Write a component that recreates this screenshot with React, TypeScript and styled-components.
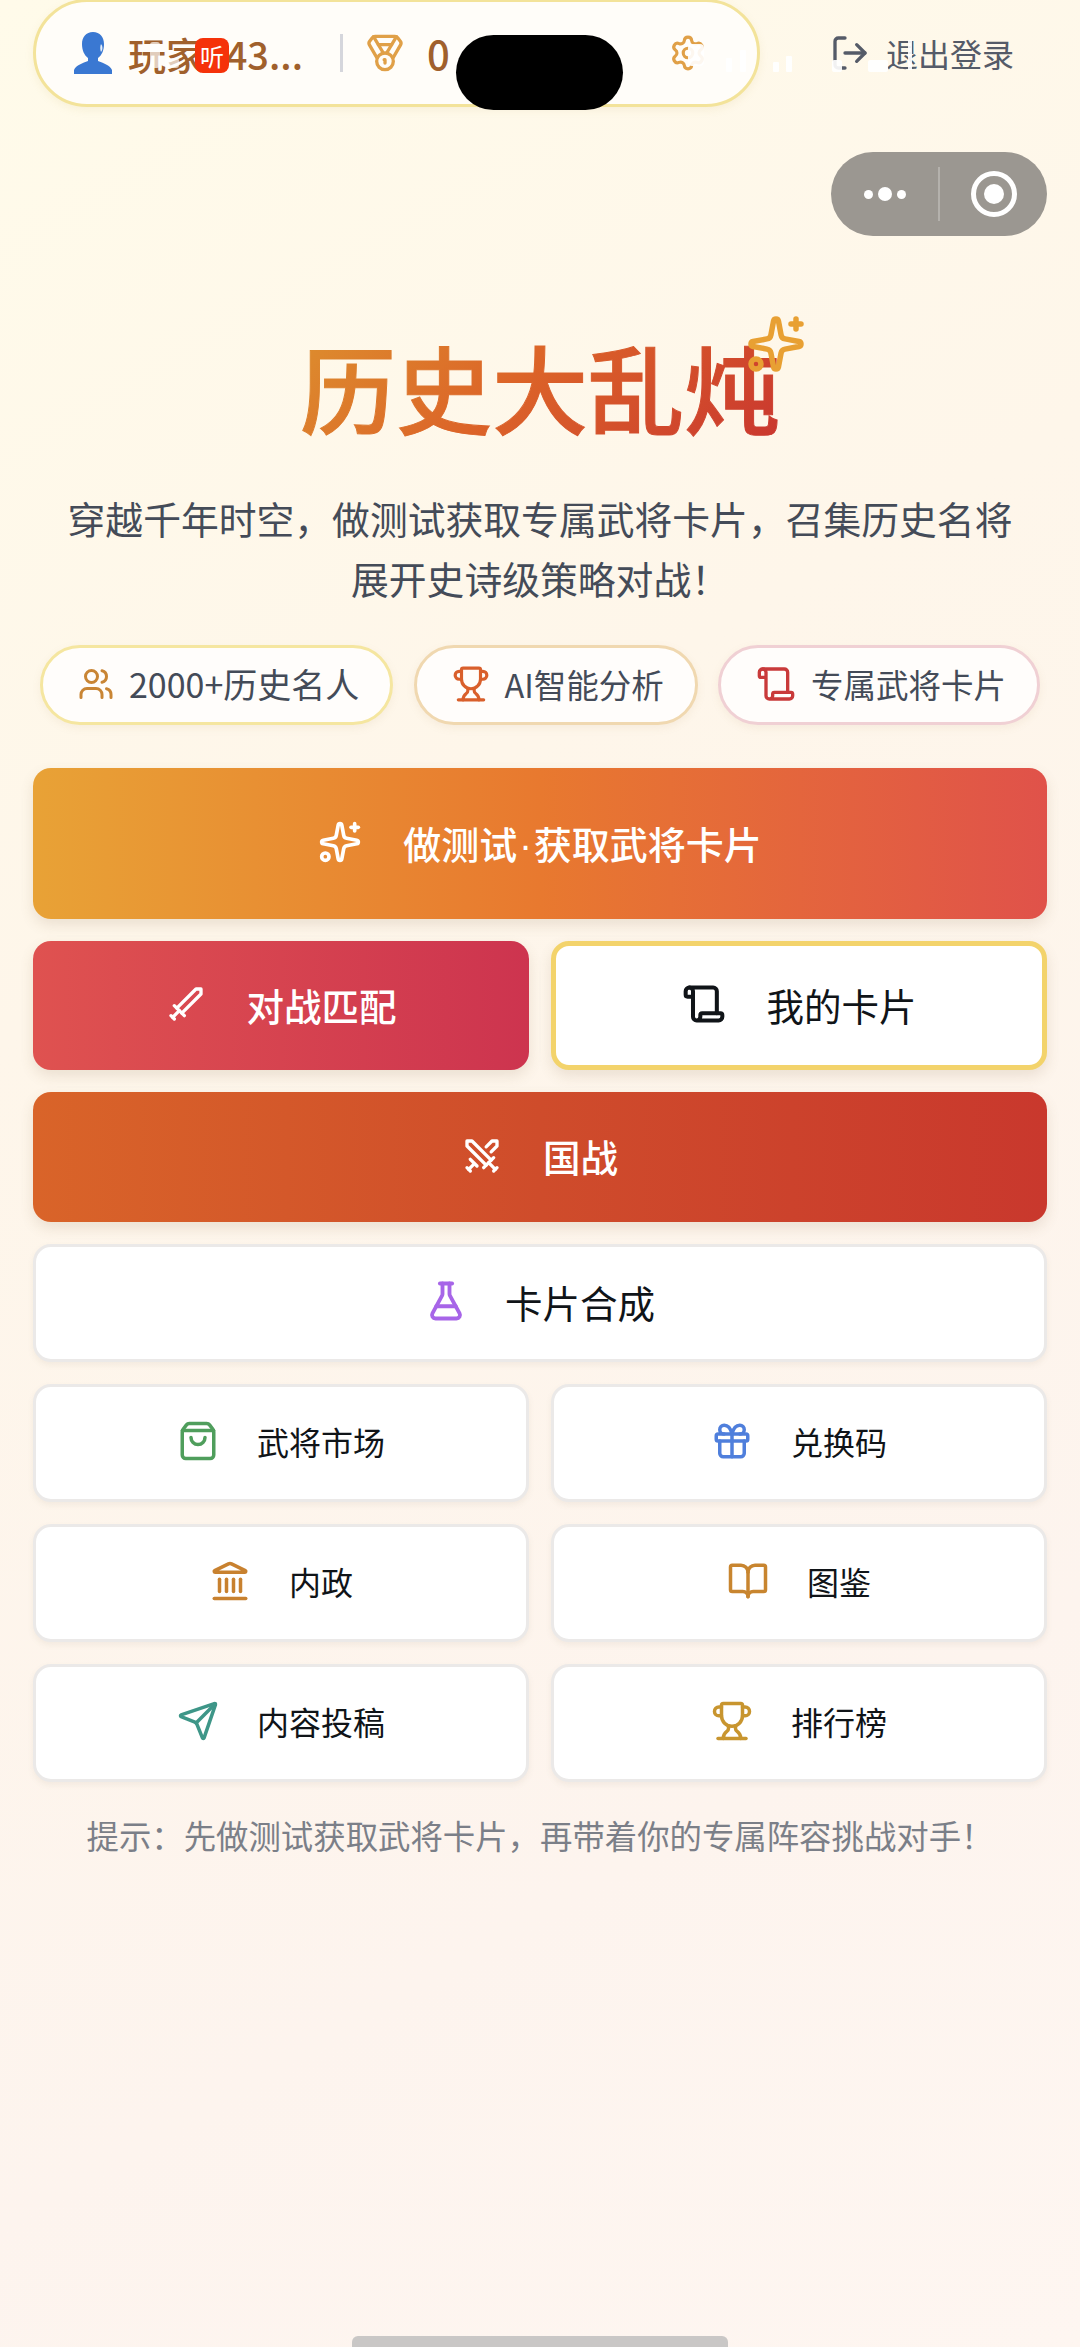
import React from "react";
import styled, { createGlobalStyle } from "styled-components";
import {
    BookOpen,
    FlaskConical,
    Gift,
    Landmark,
    LogOut,
    Medal,
    Scroll,
    Send,
    Settings,
    ShoppingBag,
    Sparkles,
    Sword,
    Swords,
    Trophy,
    Users,
    LucideIcon,
} from "lucide-react";

const GlobalStyle = createGlobalStyle`
    html, body {
        margin: 0;
        padding: 0;
    }
    body {
        font-family: "Noto Sans CJK SC", "Liberation Sans", sans-serif;
    }
    * {
        box-sizing: border-box;
    }
`;

const Page = styled.div`
    position: relative;
    width: 1080px;
    height: 2347px;
    overflow: hidden;
    padding: 0 33px;
    background: linear-gradient(150deg, #fffbea 0%, #fef6ea 35%, #fdf4ee 75%, #fef6f1 100%);
`;

const Header = styled.div`
    display: flex;
    align-items: center;
    height: 108px;
    margin-top: -1px;
`;

const UserPill = styled.div`
    display: flex;
    align-items: center;
    width: 727px;
    height: 100%;
    padding: 0 50px 0 38px;
    background: #fffdf9;
    border: 3px solid #f3e39a;
    border-radius: 54px;
    box-shadow: 0 3px 8px rgba(200, 170, 90, 0.12);
`;

const PlayerName = styled.span`
    margin-left: 16px;
    width: 180px;
    font-size: 38px;
    font-weight: 500;
    color: #a0602c;
    white-space: nowrap;
`;

const Divider = styled.span`
    width: 3px;
    height: 38px;
    margin: 0 22px 0 32px;
    background: #d5d6dc;
`;

const Score = styled.span`
    margin-left: 22px;
    flex: 1;
    font-size: 40px;
    font-weight: 500;
    color: #a0602c;
`;

const LogoutButton = styled.div`
    display: flex;
    align-items: center;
    gap: 16px;
    margin-left: 70px;
    font-size: 32px;
    color: #555b68;
`;

const Hero = styled.div`
    display: flex;
    flex-direction: column;
    align-items: center;
    margin-top: 219px;
`;

const TitleWrap = styled.div`
    position: relative;
`;

const Title = styled.h1`
    margin: 0;
    font-size: 96px;
    line-height: 120px;
    font-weight: 500;
    letter-spacing: 0;
    background: linear-gradient(135deg, #dd8f2e 0%, #dc6428 45%, #c9362f 100%);
    -webkit-background-clip: text;
    background-clip: text;
    color: transparent;
    -webkit-text-stroke: 1px transparent;
`;

const TitleSparkle = styled(Sparkles)`
    position: absolute;
    top: -12px;
    right: -26px;
    color: #e8a033;
`;

const Subtitle = styled.p`
    margin: 42px 0 0;
    font-size: 37.8px;
    line-height: 60px;
    text-align: center;
    color: #444b58;
`;

const Chips = styled.div`
    display: flex;
    justify-content: space-between;
    margin: 37px -7px 0;
    padding: 0 14px;
`;

const Chip = styled.div<{ $border: string; $size: number }>`
    display: flex;
    align-items: center;
    gap: 15px;
    height: 80px;
    padding: 0 31px 3px 35px;
    background: #fffdfb;
    border: 3px solid ${(props) => props.$border};
    border-radius: 40px;
    font-size: ${(props) => props.$size}px;
    color: #444b58;
    box-shadow: 0 3px 8px rgba(180, 150, 100, 0.1);
    white-space: nowrap;
`;

const Actions = styled.div`
    display: flex;
    flex-direction: column;
    gap: 22px;
    margin-top: 43px;
`;

const Row = styled.div`
    display: grid;
    grid-template-columns: 1fr 1fr;
    gap: 22px;
`;

const ActionButton = styled.div<{
    $bg: string;
    $color: string;
    $height: number;
    $size: number;
    $border?: string;
    $weight?: number;
}>`
    display: flex;
    align-items: center;
    justify-content: center;
    gap: 41px;
    height: ${(props) => props.$height}px;
    padding-bottom: 3px;
    background: ${(props) => props.$bg};
    color: ${(props) => props.$color};
    font-size: ${(props) => props.$size}px;
    font-weight: ${(props) => props.$weight || 500};
    border: ${(props) => props.$border || "none"};
    border-radius: 18px;
    box-shadow: 0 6px 14px rgba(120, 90, 60, 0.14);
`;

const NarrowDot = styled.span`
    font-family: "Liberation Sans", sans-serif;
    margin: 0 2px;
`;

const LightButton = styled.div<{ $height: number; $size: number }>`
    display: flex;
    align-items: center;
    justify-content: center;
    gap: 38px;
    height: ${(props) => props.$height}px;
    padding-bottom: 4px;
    background: #ffffff;
    color: #101418;
    font-size: ${(props) => props.$size}px;
    border: 3px solid #ebe9e8;
    border-radius: 18px;
    box-shadow: 0 3px 6px rgba(120, 100, 80, 0.08);
`;

const Hint = styled.p`
    margin: 30px 0 0;
    font-size: 32.4px;
    line-height: 46px;
    text-align: center;
    color: #7b7f88;
`;

// the phone chrome that the screenshot has on top of the page
const Notch = styled.div`
    position: absolute;
    left: 456px;
    top: 35px;
    width: 167px;
    height: 75px;
    background: #000;
    border-radius: 38px;
`;

const ListenBadge = styled.div`
    position: absolute;
    left: 195px;
    top: 38px;
    width: 34px;
    height: 35px;
    display: flex;
    align-items: center;
    justify-content: center;
    background: #f5320a;
    border-radius: 8px;
    color: #fff;
    font-size: 24px;
`;

const StatusIcons = styled.svg`
    position: absolute;
    left: 0;
    top: 0;
`;

const Capsule = styled.div`
    position: absolute;
    left: 831px;
    top: 152px;
    width: 216px;
    height: 84px;
    display: flex;
    align-items: center;
    background: #9b9791;
    border-radius: 42px;
`;

const CapsuleSide = styled.div`
    flex: 1;
    display: flex;
    align-items: center;
    justify-content: center;
    gap: 5px;
`;

const CapsuleLine = styled.span`
    width: 2px;
    height: 54px;
    background: rgba(255, 255, 255, 0.25);
`;

const Dot = styled.span<{ $size: number }>`
    width: ${(props) => props.$size}px;
    height: ${(props) => props.$size}px;
    border-radius: 50%;
    background: #fff;
`;

const Ring = styled.span`
    display: flex;
    align-items: center;
    justify-content: center;
    width: 46px;
    height: 46px;
    border: 5px solid #fff;
    border-radius: 50%;
`;

const HomeBar = styled.div`
    position: absolute;
    left: 352px;
    bottom: 0;
    width: 376px;
    height: 11px;
    background: #c9c7c6;
    border-radius: 6px 6px 0 0;
`;

const chips: { icon: LucideIcon; color: string; border: string; text: string; iconSize: number; fontSize: number }[] = [
    { icon: Users, color: "#c98534", border: "#f5e6a0", text: "2000+历史名人", iconSize: 36, fontSize: 34 },
    { icon: Trophy, color: "#d95f2b", border: "#f0d8b0", text: "AI智能分析", iconSize: 38, fontSize: 32.5 },
    { icon: Scroll, color: "#c93a3a", border: "#f0d0d4", text: "专属武将卡片", iconSize: 40, fontSize: 32.5 },
];

const gridRows: { icon: LucideIcon; color: string; text: string }[][] = [
    [
        { icon: ShoppingBag, color: "#4f9e5c", text: "武将市场" },
        { icon: Gift, color: "#4f7fdc", text: "兑换码" },
    ],
    [
        { icon: Landmark, color: "#c8812f", text: "内政" },
        { icon: BookOpen, color: "#c8852f", text: "图鉴" },
    ],
    [
        { icon: Send, color: "#3e9688", text: "内容投稿" },
        { icon: Trophy, color: "#c8952f", text: "排行榜" },
    ],
];

const UserGlyph = () => (
    <svg width="38" height="42" viewBox="0 0 38 42">
        <path d="M19 0c7 0 11 5 11 12 0 6-2 11-6 14v3c5 2 12 4 14 9l0 4H0v-4c2-5 9-7 14-9v-3c-4-3-6-8-6-14C8 5 12 0 19 0z" fill="#3a78d2" />
        <path d="M27 12c2 2 2 6 0 8-1-2-1-6 0-8z" fill="#e6eef8" />
    </svg>
);

export default function App() {
    return (
        <Page>
            <GlobalStyle />
            <Header>
                <UserPill>
                    <UserGlyph />
                    <PlayerName>玩家943...</PlayerName>
                    <Divider />
                    <Medal size={40} color="#e0a048" strokeWidth={2} />
                    <Score>0</Score>
                    <Settings size={38} color="#e0a048" strokeWidth={2} />
                </UserPill>
                <LogoutButton>
                    <LogOut size={40} color="#555b68" strokeWidth={2} style={{ display: "block" }} />
                    退出登录
                </LogoutButton>
            </Header>
            <Hero>
                <TitleWrap>
                    <Title>历史大乱炖</Title>
                    <TitleSparkle size={60} strokeWidth={2.2} />
                </TitleWrap>
                <Subtitle>
                    穿越千年时空，做测试获取专属武将卡片，召集历史名将
                    <br />
                    展开史诗级策略对战！
                </Subtitle>
            </Hero>
            <Chips>
                {chips.map((chip) => (
                    <Chip key={chip.text} $border={chip.border} $size={chip.fontSize}>
                        <chip.icon size={chip.iconSize} color={chip.color} strokeWidth={2} />
                        {chip.text}
                    </Chip>
                ))}
            </Chips>
            <Actions>
                <ActionButton $bg="linear-gradient(90deg, #e8a236 0%, #e8792f 50%, #e0524a 100%)" $color="#fff" $height={151} $size={38}>
                    <Sparkles size={44} strokeWidth={2} />
                    <span>
                        做测试<NarrowDot>·</NarrowDot>获取武将卡片
                    </span>
                </ActionButton>
                <Row>
                    <ActionButton $bg="linear-gradient(90deg, #df5250 0%, #cd344f 100%)" $color="#fff" $height={129} $size={37.5}>
                        <Sword size={40} strokeWidth={2} />
                        对战匹配
                    </ActionButton>
                    <ActionButton $bg="#fff" $color="#101418" $height={129} $size={37.5} $border="5px solid #f3d36b" $weight={400}>
                        <Scroll size={44} strokeWidth={2.2} />
                        我的卡片
                    </ActionButton>
                </Row>
                <ActionButton $bg="linear-gradient(90deg, #d96429 0%, #cf4c2b 50%, #c9382d 100%)" $color="#fff" $height={130} $size={37.5}>
                    <Swords size={40} strokeWidth={2} />
                    国战
                </ActionButton>
                <LightButton $height={118} $size={37.5}>
                    <FlaskConical size={42} color="#a765e8" strokeWidth={2.2} />
                    卡片合成
                </LightButton>
                {gridRows.map((row) => (
                    <Row key={row[0].text}>
                        {row.map((item) => (
                            <LightButton key={item.text} $height={118} $size={32}>
                                <item.icon size={42} color={item.color} strokeWidth={2} />
                                {item.text}
                            </LightButton>
                        ))}
                    </Row>
                ))}
            </Actions>
            <Hint>提示：先做测试获取武将卡片，再带着你的专属阵容挑战对手！</Hint>

            <ListenBadge>听</ListenBadge>
            <StatusIcons width="1080" height="110" viewBox="0 0 1080 110">
                <g fill="#ffffff" opacity="0.92">
                    <rect x="150" y="42" width="10" height="26" rx="3" opacity="0.75" />
                    <rect x="165" y="58" width="14" height="10" rx="3" opacity="0.75" />
                    <rect x="688" y="44" width="16" height="22" rx="4" />
                    <rect x="726" y="58" width="6" height="14" rx="1" />
                    <rect x="740" y="50" width="6" height="22" rx="1" />
                    <rect x="773" y="62" width="6" height="10" rx="1" />
                    <rect x="786" y="56" width="6" height="16" rx="1" />
                    <rect x="832" y="60" width="10" height="12" rx="2" />
                    <rect x="868" y="60" width="20" height="12" rx="2" />
                    <rect x="908" y="40" width="4" height="30" />
                </g>
            </StatusIcons>
            <Notch />
            <Capsule>
                <CapsuleSide>
                    <Dot $size={9} />
                    <Dot $size={14} />
                    <Dot $size={9} />
                </CapsuleSide>
                <CapsuleLine />
                <CapsuleSide>
                    <Ring>
                        <Dot $size={20} />
                    </Ring>
                </CapsuleSide>
            </Capsule>
            <HomeBar />
        </Page>
    );
}
